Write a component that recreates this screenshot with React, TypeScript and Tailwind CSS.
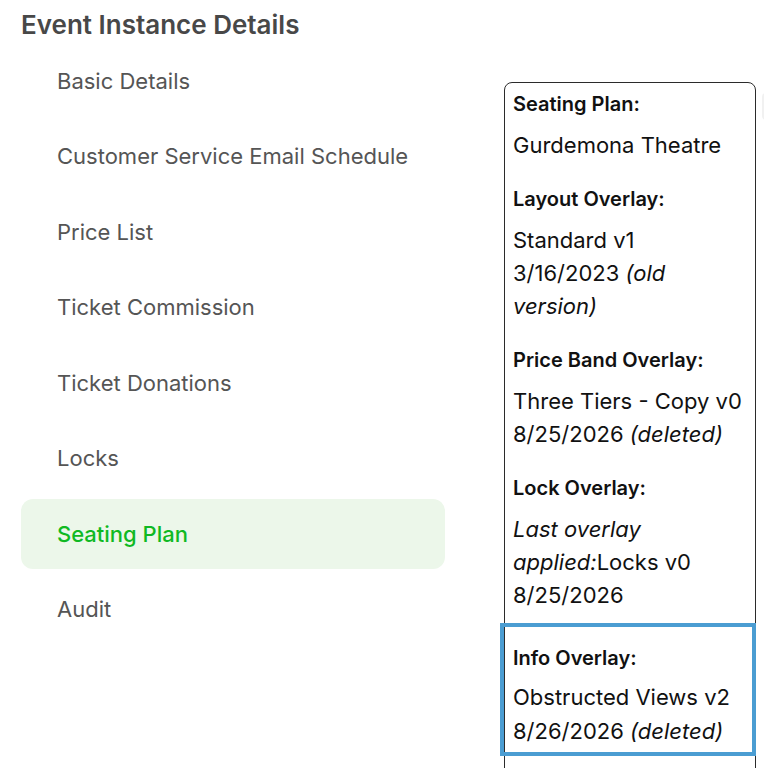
const navItems = [
  "Basic Details",
  "Customer Service Email Schedule",
  "Price List",
  "Ticket Commission",
  "Ticket Donations",
  "Locks",
  "Seating Plan",
  "Audit",
];

function NavList({ active }: { active: string }) {
  return (
    <nav className="mt-[5px] flex flex-col gap-[5.5px]">
      {navItems.map((item) => {
        const isActive = item === active;
        return (
          <div
            key={item}
            className={
              isActive
                ? "flex h-[70px] items-center rounded-xl bg-[#ecf7ea] pl-9 text-[22px] font-medium text-[#0fb923]"
                : "flex h-[70px] items-center pl-9 text-[22px] text-[#555]"
            }
          >
            {item}
          </div>
        );
      })}
    </nav>
  );
}

function Section({ title, children }: { title: string; children: React.ReactNode }) {
  return (
    <div className="px-2 pt-[5px] pb-[16px]">
      <div className="text-[20px] font-semibold leading-[33px] text-[#111]">{title}</div>
      <div className="mt-2 text-[22px] leading-[33px] text-[#111]">{children}</div>
    </div>
  );
}

function SeatingSummary() {
  return (
    <div className="mt-[82px] w-[252px] shrink-0 rounded-lg border border-[#2b2b2b] pb-20">
      <Section title="Seating Plan:">Gurdemona Theatre</Section>
      <Section title="Layout Overlay:">
        Standard v1
        <br />
        3/16/2023 <i>(old</i>
        <br />
        <i>version)</i>
      </Section>
      <Section title="Price Band Overlay:">
        Three Tiers - Copy v0
        <br />
        8/25/2026 <i>(deleted)</i>
      </Section>
      <Section title="Lock Overlay:">
        <i>Last overlay</i>
        <br />
        <i>applied:</i>Locks v0
        <br />
        8/25/2026
      </Section>
      {/* currently focused overlay */}
      <div className="-mt-[5px] ml-[-5px] mr-[-1px] border-4 border-[#4b9dd2] pt-[15px] pb-[4px] pl-[9px]">
        <div className="text-[20px] font-semibold leading-[33px] text-[#111]">Info Overlay:</div>
        <div className="mt-[5px] text-[22px] leading-[34px] text-[#111]">
          Obstructed Views v2
          <br />
          8/26/2026 <i>(deleted)</i>
        </div>
      </div>
    </div>
  );
}

export default function App() {
  return (
    <div className="flex h-screen overflow-hidden bg-white font-['Inter',sans-serif]">
      <div className="ml-[21px] w-[424px] shrink-0 pt-[9px]">
        <h1 className="text-[26px] font-semibold leading-[32px] text-[#484848]">
          Event Instance Details
        </h1>
        <NavList active="Seating Plan" />
      </div>
      <div className="ml-[59px]">
        <SeatingSummary />
      </div>
      <div className="ml-[6px] mt-[93px] h-[27px] w-[12px] shrink-0 rounded bg-[#f1f1f1]" />
    </div>
  );
}
